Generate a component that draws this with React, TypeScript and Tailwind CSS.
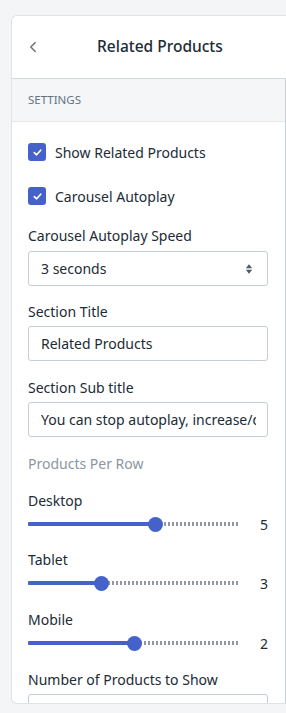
import { ChevronLeft } from 'lucide-react'

const font = { fontFamily: '"Noto Sans", "Open Sans", sans-serif' }

function Check({ label }: { label: string }) {
  return (
    <label className="flex items-center gap-[9px] h-[18px]">
      <span className="flex h-[18px] w-[18px] shrink-0 items-center justify-center rounded-[3px] bg-[#4462c9]">
        <svg viewBox="0 0 12 12" className="h-[11px] w-[11px]" fill="none" stroke="white" strokeWidth="1.8" strokeLinecap="round" strokeLinejoin="round">
          <path d="M2.5 6.2 5 8.5 9.5 3.5" />
        </svg>
      </span>
      <span className="text-[14px] text-[#212b36]">{label}</span>
    </label>
  )
}

function Field({ label, value }: { label: string; value: string }) {
  return (
    <div className="flex flex-col">
      <span className="text-[14px] leading-[20px] text-[#212b36]">{label}</span>
      <input
        readOnly
        value={value}
        className="mt-[4px] h-[35px] w-[240px] rounded-[3px] border border-[#c4cdd5] pl-[12px] pr-[11px] text-[14px] text-[#212b36] outline-none"
        style={font}
      />
    </div>
  )
}

function Slider({ label, value, thumb, className }: { label: string; value: number; thumb: number; className?: string }) {
  return (
    <div className={className}>
      <span className="block text-[14px] leading-[20px] text-[#212b36]">{label}</span>
      <div className="mt-[5px] flex h-[16px] w-[240px] items-center">
        <div className="relative h-[16px] w-[212px]">
          <div className="absolute left-0 right-0 top-[6px] h-[4px] bg-[repeating-linear-gradient(90deg,#8f98a3_0_2px,transparent_2px_4px)]" />
          <div className="absolute left-0 top-[6px] h-[4px] rounded-full bg-[#4462c9]" style={{ width: thumb }} />
          <div className="absolute top-[0.5px] h-[15px] w-[15px] rounded-full bg-[#4462c9]" style={{ left: thumb - 7.5 }} />
        </div>
        <span className="ml-auto text-[14px] text-[#212b36]">{value}</span>
      </div>
    </div>
  )
}

export default function App() {
  return (
    <div className="h-[713px] w-[286px] overflow-hidden bg-[#f4f5f7] pt-[15px] pl-[11px]" style={font}>
      <div className="flex h-[689px] flex-col overflow-hidden rounded-l-[6px] border border-r-0 border-[#dfe3e8] bg-white">
        <div className="flex h-[63px] shrink-0 items-center border-b border-[#d3d8de]">
          <ChevronLeft className="ml-[12px] h-[18px] w-[18px] text-[#6b7580]" strokeWidth={2} />
          <span className="ml-[55px] text-[15.5px] font-medium text-[#212b36]">Related Products</span>
        </div>
        <div className="flex flex-1 flex-col border-r border-[#c9ced4]">
          <div className="flex h-[43px] shrink-0 items-center border-b border-[#e6e9ec] bg-[#f4f6f8] pl-[16px]">
            <span className="text-[11.5px] uppercase text-[#637381]">Settings</span>
          </div>
          <div className="flex flex-col pl-[16px] pt-[21px]">
            <Check label="Show Related Products" />
            <div className="mt-[26px]">
              <Check label="Carousel Autoplay" />
            </div>
            <div className="mt-[21px] flex flex-col">
              <span className="text-[14px] leading-[20px] text-[#212b36]">Carousel Autoplay Speed</span>
              <div className="mt-[5px] flex h-[35px] w-[240px] items-center justify-between rounded-[3px] border border-[#c4cdd5] pl-[12px] pr-[14px]">
                <span className="text-[14px] text-[#212b36]">3 seconds</span>
                <svg viewBox="0 0 10 14" className="h-[12px] w-[8px]" fill="#4f5b66">
                  <path d="M5 1 9 6H1z" />
                  <path d="M5 13 1 8h8z" />
                </svg>
              </div>
            </div>
            <div className="mt-[16px]">
              <Field label="Section Title" value="Related Products" />
            </div>
            <div className="mt-[17px]">
              <Field label="Section Sub title" value="You can stop autoplay, increase/decrease speed" />
            </div>
            <span className="mt-[17px] text-[14px] leading-[20px] text-[#8c96a1]">Products Per Row</span>
            <Slider className="mt-[17px]" label="Desktop" value={5} thumb={127} />
            <Slider className="mt-[18px]" label="Tablet" value={3} thumb={73} />
            <Slider className="mt-[19px]" label="Mobile" value={2} thumb={106} />
            <div className="mt-[19px]">
              <Field label="Number of Products to Show" value="" />
            </div>
          </div>
        </div>
      </div>
    </div>
  )
}
